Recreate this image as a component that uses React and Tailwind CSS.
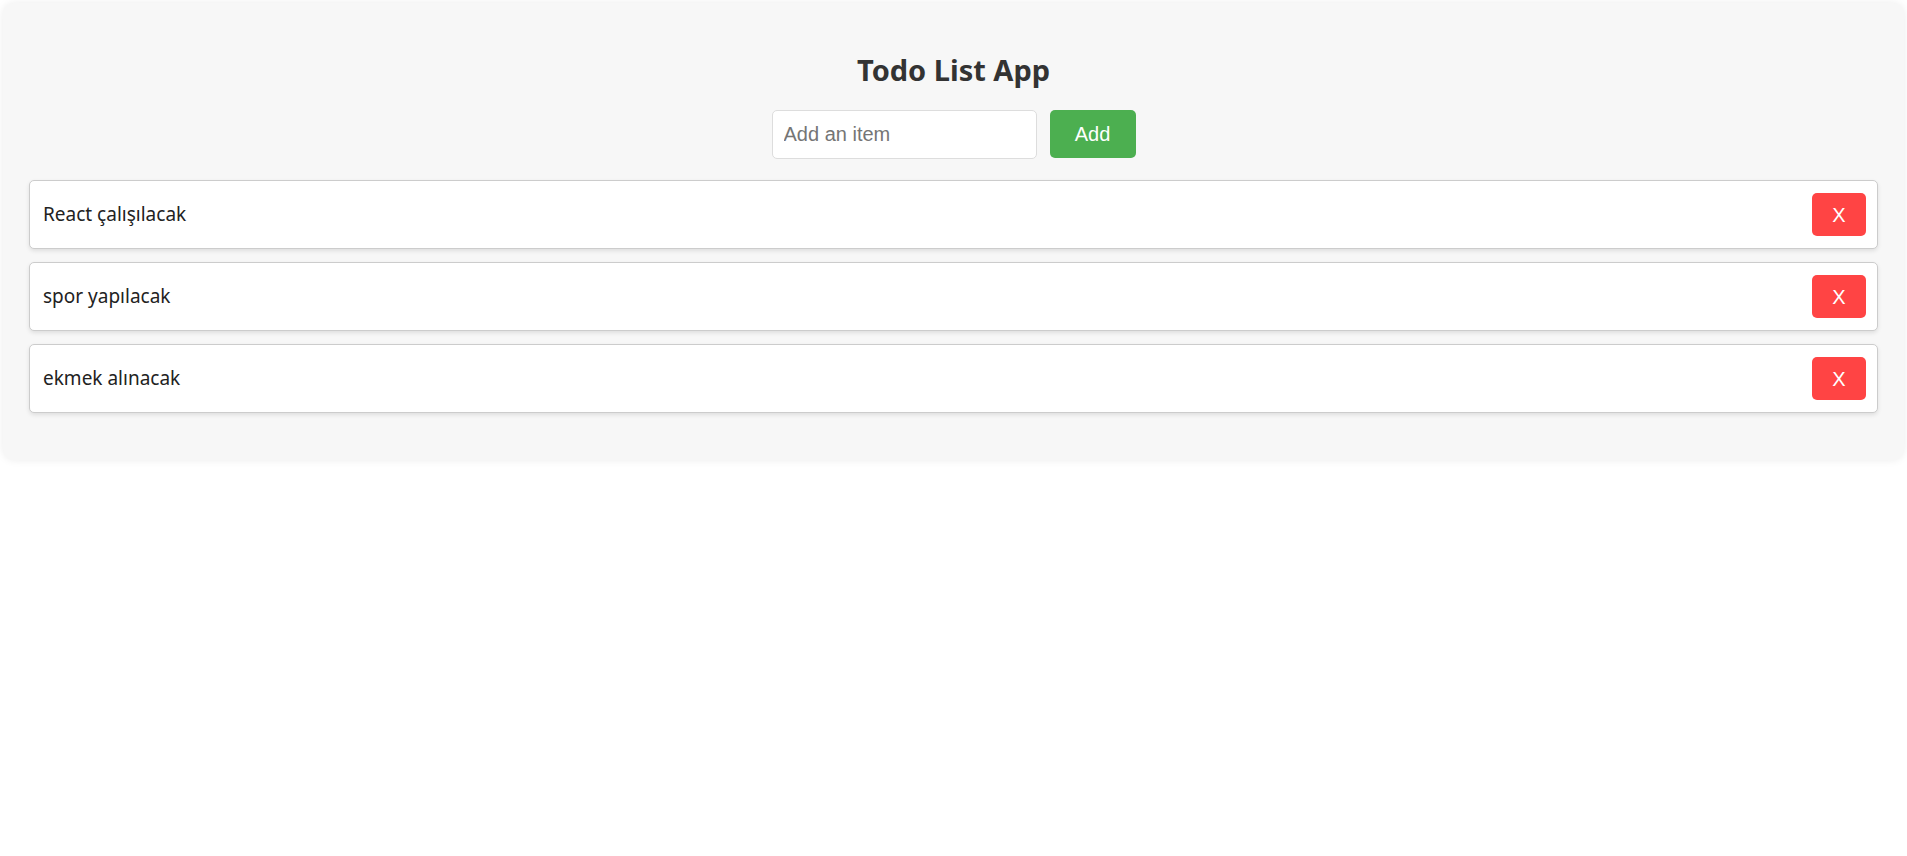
import React, { useState } from 'react';

export default function App() {
  const [items, setItems] = useState(['React çalışılacak', 'spor yapılacak', 'ekmek alınacak']);
  const [text, setText] = useState('');

  const add = () => {
    if (!text.trim()) return;
    setItems([...items, text.trim()]);
    setText('');
  };

  return (
    <div className="min-h-screen bg-white p-[3px] font-['Noto_Sans',sans-serif]">
      <div className="rounded-[12px] bg-[#f7f7f7] px-[26px] pb-[47px] pt-[47px] shadow-[0_0_8px_rgba(0,0,0,0.08)]">
        <h2 className="text-center text-[29px] font-bold leading-[40px] text-[#333]">Todo List App</h2>
        <div className="mt-[20px] flex justify-center gap-[13px]">
          <input
            value={text}
            onChange={(e) => setText(e.target.value)}
            placeholder="Add an item"
            className="h-[49px] w-[265px] rounded-[5px] border border-[#ddd] bg-white px-[11px] font-['Liberation_Sans',sans-serif] text-[20px] text-[#222] placeholder:text-[#757575] outline-none"
          />
          <button
            onClick={add}
            className="h-[48px] w-[86px] rounded-[5px] bg-[#4caf50] font-['Liberation_Sans',sans-serif] text-[20px] text-white"
          >
            Add
          </button>
        </div>
        <ul className="mt-[21px] flex flex-col gap-[13px]">
          {items.map((item, i) => (
            <li
              key={i}
              className="flex h-[69px] items-center justify-between rounded-[5px] border border-[#ccc] bg-white pl-[13px] pr-[11px] text-[19px] text-[#222] shadow-[0_2px_4px_rgba(0,0,0,0.1)]"
            >
              <span>{item}</span>
              <button
                onClick={() => setItems(items.filter((_, j) => j !== i))}
                className="h-[43px] w-[54px] rounded-[5px] bg-[#ff4444] font-['Liberation_Sans',sans-serif] text-[20px] text-white"
              >
                X
              </button>
            </li>
          ))}
        </ul>
      </div>
    </div>
  );
}
